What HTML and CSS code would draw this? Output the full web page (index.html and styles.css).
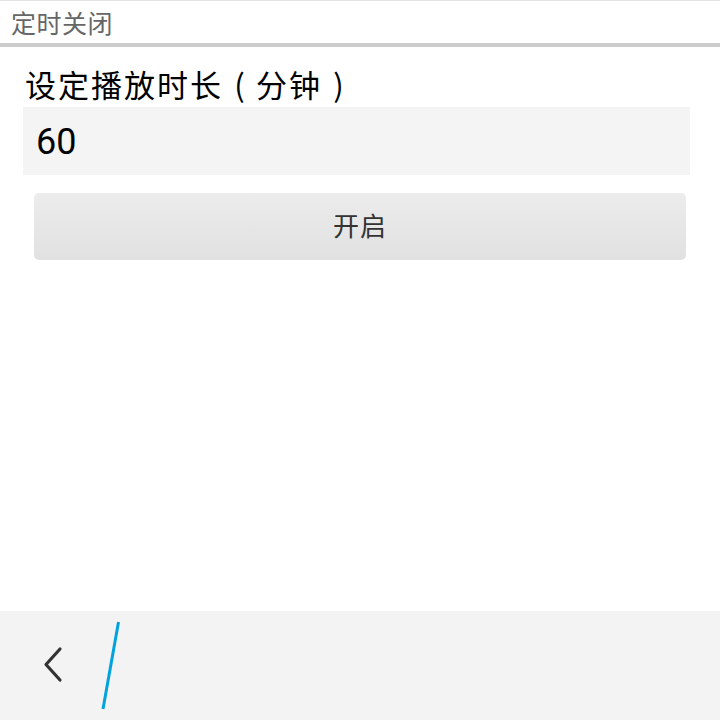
FILE: index.html
```html
<!DOCTYPE html>
<html lang="zh">
<head>
<meta charset="utf-8">
<title>定时关闭</title>
<link rel="stylesheet" href="styles.css">
</head>
<body>
<div class="page">
  <header class="titlebar">定时关闭</header>
  <main class="content">
    <div class="label">设定播放时长<span class="paren">(</span>分钟<span class="paren">)</span></div>
    <div class="input">60</div>
    <div class="button">开启</div>
  </main>
  <footer class="footer">
    <svg class="footer-icons" width="140" height="109" viewBox="0 0 140 109">
      <polyline points="60,38 46,53.5 60,69" fill="none" stroke="#333" stroke-width="3.2" stroke-linecap="round" stroke-linejoin="round"/>
      <line x1="118.5" y1="11" x2="103" y2="98" stroke="#00a3dd" stroke-width="3"/>
    </svg>
  </footer>
</div>
</body>
</html>
```
FILE: styles.css
```css
html, body {
  margin: 0;
  padding: 0;
  background: #ffffff;
}
body {
  font-family: "Noto Sans CJK SC", "Liberation Sans", sans-serif;
}
.page {
  width: 720px;
  height: 720px;
  display: flex;
  flex-direction: column;
  overflow: hidden;
}
.titlebar {
  height: 42px;
  border-top: 1px solid #e2e2e2;
  border-bottom: 4px solid #cccccc;
  padding-left: 11px;
  font-size: 25px;
  line-height: 42px;
  color: #666666;
  letter-spacing: 0.5px;
}
.content {
  flex: 1;
  padding: 18px 30px 0 23px;
  display: flex;
  flex-direction: column;
}
.label {
  padding-left: 2px;
  font-size: 31px;
  line-height: 37px;
  letter-spacing: 2px;
  color: #000000;
  white-space: nowrap;
}
.paren {
  display: inline-block;
  width: 33px;
  text-align: center;
  letter-spacing: 0;
}
.input {
  margin-top: 5px;
  height: 68px;
  width: 667px;
  box-sizing: border-box;
  background: #f4f4f4;
  padding: 2px 0 0 13px;
  font-family: "Roboto", "Liberation Sans", sans-serif;
  font-size: 36px;
  line-height: 66px;
  color: #000000;
}
.button {
  margin: 18px 0 0 11px;
  width: 652px;
  height: 67px;
  border-radius: 5px;
  background: linear-gradient(#ececec, #e1e1e1);
  text-align: center;
  font-size: 26px;
  line-height: 63px;
  color: #333333;
  letter-spacing: 1px;
}
.footer {
  height: 109px;
  background: #f3f3f3;
  display: flex;
}
.footer-icons {
  display: block;
}
```
